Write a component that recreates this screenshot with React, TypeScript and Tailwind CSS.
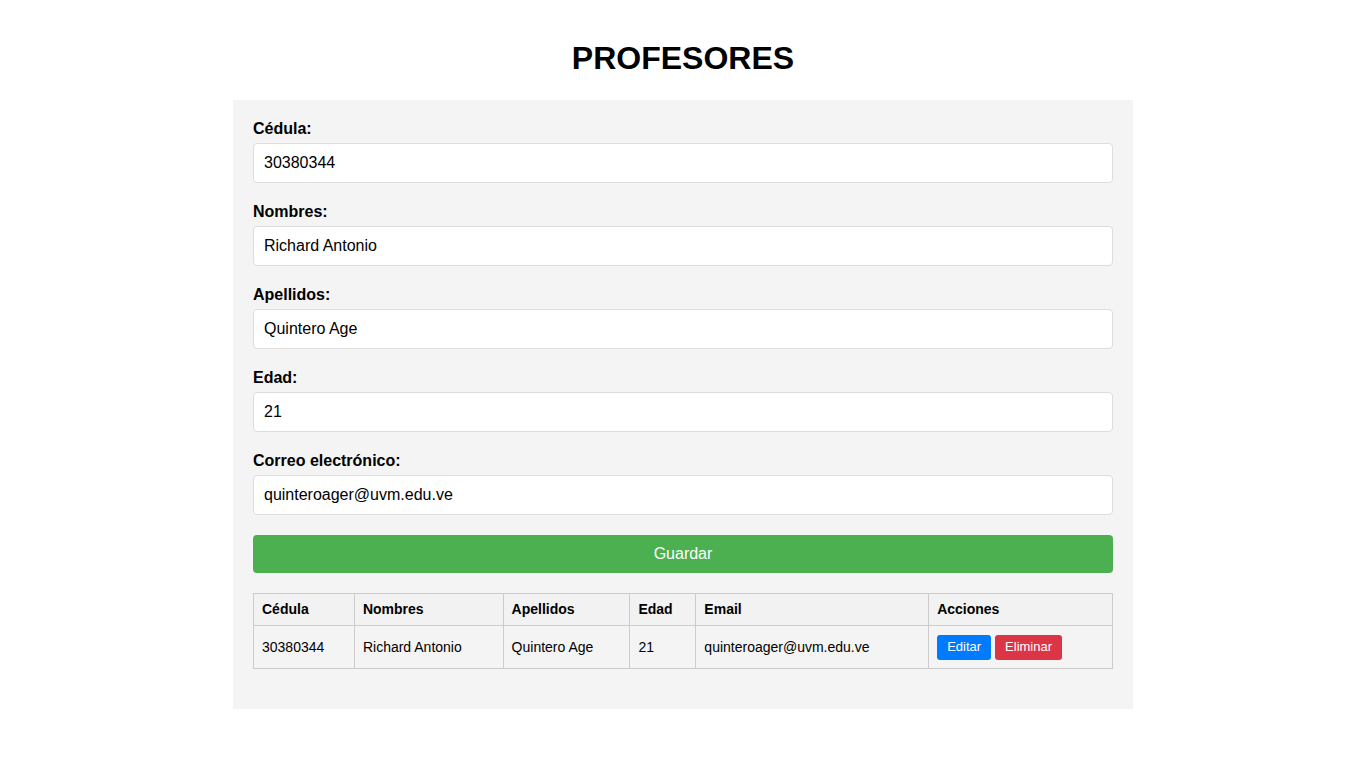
import React from "react";

const fields = [
  { label: "Cédula:", value: "30380344" },
  { label: "Nombres:", value: "Richard Antonio" },
  { label: "Apellidos:", value: "Quintero Age" },
  { label: "Edad:", value: "21" },
  { label: "Correo electrónico:", value: "quinteroager@uvm.edu.ve" },
];

const columns = [
  { name: "Cédula", w: "w-[101px]" },
  { name: "Nombres", w: "w-[149px]" },
  { name: "Apellidos", w: "w-[127px]" },
  { name: "Edad", w: "w-[66px]" },
  { name: "Email", w: "w-[233px]" },
  { name: "Acciones", w: "w-[184px]" },
];

const App: React.FC = () => {
  return (
    <div className="min-h-[768px] bg-white font-['Liberation_Sans',Arial,sans-serif] text-black">
      <h1 className="pt-[40px] h-[77px] mb-[23px] text-center text-[32px] leading-[37px] font-bold">
        PROFESORES
      </h1>
      <div className="mx-auto w-[900px] bg-[#f4f4f4] p-[20px]">
        {fields.map((f) => (
          <div key={f.label} className="mb-[20px]">
            <label className="block h-[18px] leading-[18px] text-[16px] font-bold mb-[5px]">
              {f.label}
            </label>
            <input
              className="block w-full h-[40px] px-[10px] text-[16px] bg-white border border-[#dddddd] rounded-[4px] outline-none"
              defaultValue={f.value}
            />
          </div>
        ))}
        <button className="block w-full h-[38px] bg-[#4caf50] text-white text-[16px] rounded-[4px]">
          Guardar
        </button>
        <table className="mt-[20px] mb-[20px] w-full border-collapse text-[14px]">
          <thead>
            <tr className="h-[32px] bg-[#f2f2f2]">
              {columns.map((c) => (
                <th
                  key={c.name}
                  className={`${c.w} border border-[#cccccc] px-[8px] text-left font-bold`}
                >
                  {c.name}
                </th>
              ))}
            </tr>
          </thead>
          <tbody>
            <tr className="h-[43px]">
              <td className="border border-[#cccccc] px-[8px]">30380344</td>
              <td className="border border-[#cccccc] px-[8px]">Richard Antonio</td>
              <td className="border border-[#cccccc] px-[8px]">Quintero Age</td>
              <td className="border border-[#cccccc] px-[8px]">21</td>
              <td className="border border-[#cccccc] px-[8px]">quinteroager@uvm.edu.ve</td>
              <td className="border border-[#cccccc] px-[8px]">
                <div className="flex gap-[4px]">
                  <button className="h-[25px] px-[10px] bg-[#007bff] text-white text-[13px] rounded-[3px]">
                    Editar
                  </button>
                  <button className="h-[25px] px-[10px] bg-[#dc3545] text-white text-[13px] rounded-[3px]">
                    Eliminar
                  </button>
                </div>
              </td>
            </tr>
          </tbody>
        </table>
      </div>
    </div>
  );
};

export default App;
